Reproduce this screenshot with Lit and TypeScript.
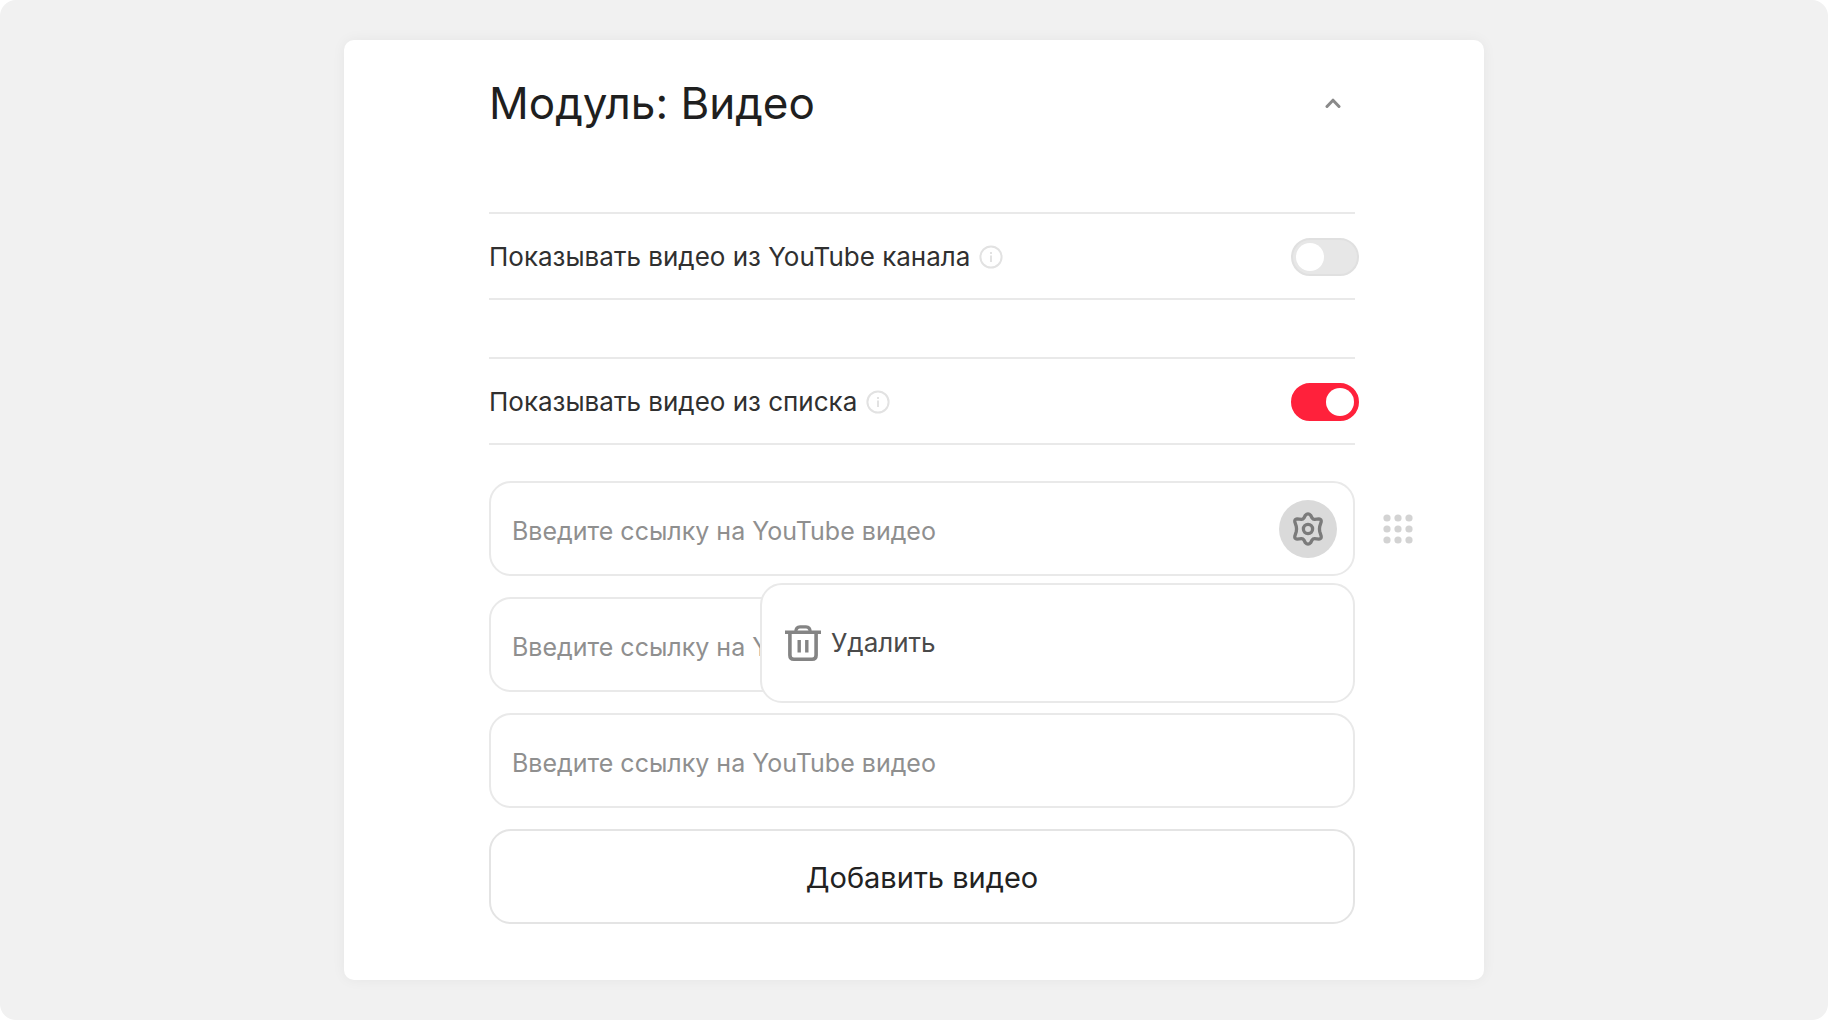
import { LitElement, html, css, svg, nothing } from "lit";
import { customElement, property, state } from "lit/decorators.js";

const chevronUp = svg`<svg width="16" height="12" viewBox="0 0 16 12" fill="none" stroke="currentColor" stroke-width="3" stroke-linecap="round" stroke-linejoin="round" aria-hidden="true"><path d="M2 9.5 8 3.2 14 9.5"/></svg>`;

const infoIcon = svg`<svg width="24" height="24" viewBox="0 0 24 24" fill="none" stroke="currentColor" stroke-width="2" aria-hidden="true"><circle cx="12" cy="12" r="10.6"/><path d="M12 10.5V17M12 7v2"/></svg>`;

const gearIcon = svg`<svg width="34" height="36" viewBox="0 0 34 36" fill="none" stroke="currentColor" stroke-width="3.3" stroke-linejoin="round" aria-hidden="true"><path d="M14.3 4.4Q17 1.4 19.7 4.4L21.2 7.2Q22 8.5 23.6 8.4L28 7.9Q30.6 8 30.2 10.8L28.7 15.6Q28.2 18 28.7 20.4L30.2 25.2Q30.6 28 28 28.1L23.6 27.6Q22 27.5 21.2 28.8L19.7 31.6Q17 34.6 14.3 31.6L12.8 28.8Q12 27.5 10.4 27.6L6 28.1Q3.4 28 3.8 25.2L5.3 20.4Q5.8 18 5.3 15.6L3.8 10.8Q3.4 8 6 7.9L10.4 8.4Q12 8.5 12.8 7.2Z"/><circle cx="17" cy="18" r="4.6"/></svg>`;

const trashIcon = svg`<svg width="36" height="38" viewBox="0 0 36 38" fill="none" stroke="currentColor" stroke-width="3.6" aria-hidden="true"><path d="M0 8.2H36"/><path d="M10.8 8Q10.8 2.8 15 2.8H21Q25.2 2.8 25.2 8" stroke-width="3.2"/><path d="M4.9 8.2V31.2Q4.9 35.2 8.9 35.2H27.1Q31.1 35.2 31.1 31.2V8.2"/><path d="M14.2 16V28.6M21.8 16V28.6" stroke-width="3.4"/></svg>`;

const dotPositions = [4, 15, 26];
const gripIcon = svg`<svg width="30" height="30" viewBox="0 0 30 30" fill="currentColor" aria-hidden="true">${dotPositions.map(
  (y) => dotPositions.map((x) => svg`<circle cx=${x} cy=${y} r="3.6"/>`)
)}</svg>`;

@customElement("setting-toggle")
class SettingToggle extends LitElement {
  @property() label = "";
  @property({ type: Boolean }) checked = false;

  static styles = css`
    :host {
      display: block;
    }
    .row {
      display: flex;
      align-items: center;
      gap: 9px;
      min-height: 82px;
      padding-top: 2px;
      border-top: 2px solid #e9e9e9;
      border-bottom: 2px solid #e9e9e9;
    }
    .label {
      font-size: 26px;
      line-height: 32px;
      color: #303030;
    }
    .info {
      display: flex;
      padding: 0;
      border: 0;
      background: none;
      color: #e2e2e2;
    }
    .switch {
      appearance: none;
      flex: none;
      box-sizing: border-box;
      width: 68px;
      height: 38px;
      margin: 0 -4px 0 auto;
      padding: 3px;
      border: 2px solid #e0e0e0;
      border-radius: 20px;
      background: #e7e7e7;
      display: flex;
      align-items: center;
      cursor: pointer;
    }
    .switch::before {
      content: "";
      width: 28px;
      height: 28px;
      border-radius: 50%;
      background: #fff;
    }
    .switch:checked {
      justify-content: flex-end;
      border-color: #ff213b;
      background: #ff213b;
    }
  `;

  render() {
    return html`
      <div class="row">
        <label class="label" for="switch">${this.label}</label>
        <button class="info" type="button" aria-label="Подсказка">${infoIcon}</button>
        <input
          class="switch"
          id="switch"
          type="checkbox"
          role="switch"
          .checked=${this.checked}
          @change=${(e: Event) => (this.checked = (e.target as HTMLInputElement).checked)}
        />
      </div>
    `;
  }
}

@customElement("video-field")
class VideoField extends LitElement {
  @property({ type: Boolean }) active = false;

  static styles = css`
    :host {
      display: block;
      position: relative;
    }
    .row {
      display: flex;
      align-items: center;
      gap: 28px;
    }
    .row.active {
      margin-right: -58px;
    }
    .field {
      flex: 1;
      min-width: 0;
      box-sizing: border-box;
      min-height: 95px;
      padding: 0 16px 0 21px;
      display: flex;
      align-items: center;
      border: 2px solid #e9e9e9;
      border-radius: 22px;
      background: #fff;
    }
    .input {
      flex: 1;
      min-width: 0;
      padding: 4px 0 0;
      border: 0;
      outline: 0;
      background: none;
      font-family: inherit;
      font-size: 25px;
      line-height: 32px;
      color: #303030;
    }
    .input::placeholder {
      color: #8f8f8f;
      opacity: 1;
    }
    .gear {
      flex: none;
      display: flex;
      align-items: center;
      justify-content: center;
      width: 58px;
      height: 58px;
      padding: 0;
      border: 0;
      border-radius: 50%;
      background: #dadada;
      color: #7b7b7b;
    }
    .grip {
      flex: none;
      display: flex;
      padding: 0;
      border: 0;
      background: none;
      color: #d3d3d3;
      cursor: grab;
    }
    .menu {
      position: absolute;
      z-index: 1;
      top: calc(100% + 7px);
      right: 0;
      box-sizing: border-box;
      width: min(595px, 100%);
      min-height: 120px;
      padding: 0 23px;
      display: flex;
      align-items: center;
      border: 2px solid #e9e9e9;
      border-radius: 22px;
      background: #fff;
    }
    .remove {
      display: flex;
      align-items: center;
      gap: 10px;
      padding: 0;
      border: 0;
      background: none;
      font-family: inherit;
      font-size: 26px;
      line-height: 32px;
      color: #4a4a4a;
    }
    .remove svg {
      color: #848484;
    }
  `;

  render() {
    return html`
      <div class="row ${this.active ? "active" : ""}">
        <div class="field">
          <input
            class="input"
            type="url"
            aria-label="Ссылка на YouTube видео"
            placeholder="Введите ссылку на YouTube видео"
          />
          ${this.active
            ? html`<button class="gear" type="button" aria-label="Настройки">${gearIcon}</button>`
            : nothing}
        </div>
        ${this.active
          ? html`<button class="grip" type="button" aria-label="Переместить">${gripIcon}</button>`
          : nothing}
      </div>
      ${this.active
        ? html`<div class="menu">
            <button class="remove" type="button">${trashIcon}<span>Удалить</span></button>
          </div>`
        : nothing}
    `;
  }
}

@customElement("app-root")
class AppRoot extends LitElement {
  @state() private videos = [{ active: true }, { active: false }, { active: false }];

  static styles = css`
    :host {
      display: block;
      font-family: Inter, "Noto Sans", sans-serif;
      background: #fff;
    }
    .page {
      box-sizing: border-box;
      min-height: 100vh;
      padding: 40px 24px;
      border-radius: 16px;
      background: #f1f1f1;
    }
    .card {
      box-sizing: border-box;
      max-width: 1140px;
      margin: 0 auto;
      padding: 37px 129px 56px 145px;
      border-radius: 10px;
      background: #fff;
      box-shadow: 0 0 14px rgba(0, 0, 0, 0.05);
    }
    .header {
      display: flex;
      align-items: center;
      justify-content: space-between;
      margin-bottom: 83px;
    }
    .title {
      margin: 0;
      font-size: 44px;
      line-height: 52px;
      font-weight: 400;
      color: #1f1f1f;
    }
    .collapse {
      display: flex;
      padding: 12px 14px;
      border: 0;
      background: none;
      color: #8a8a8a;
    }
    .settings {
      display: grid;
      gap: 57px;
      margin-bottom: 36px;
    }
    .videos {
      display: grid;
      gap: 21px;
    }
    .add {
      min-height: 95px;
      padding: 2px 24px 0;
      border: 2px solid #e4e4e4;
      border-radius: 22px;
      background: #fff;
      font-family: inherit;
      font-size: 29px;
      line-height: 36px;
      color: #222;
    }
  `;

  render() {
    return html`
      <main class="page">
        <section class="card">
          <header class="header">
            <h1 class="title">Модуль: Видео</h1>
            <button class="collapse" type="button" aria-label="Свернуть">${chevronUp}</button>
          </header>
          <div class="settings">
            <setting-toggle label="Показывать видео из YouTube канала"></setting-toggle>
            <setting-toggle label="Показывать видео из списка" checked></setting-toggle>
          </div>
          <div class="videos">
            ${this.videos.map((v) => html`<video-field ?active=${v.active}></video-field>`)}
            <button
              class="add"
              type="button"
              @click=${() => (this.videos = [...this.videos, { active: false }])}
            >
              Добавить видео
            </button>
          </div>
        </section>
      </main>
    `;
  }
}
